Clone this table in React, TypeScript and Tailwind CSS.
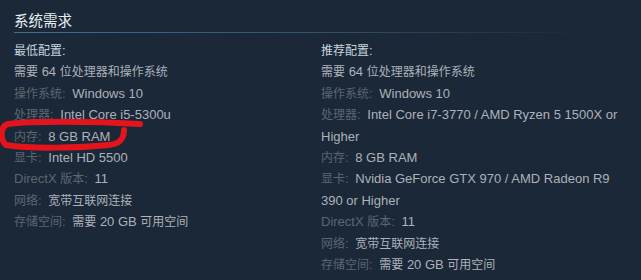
import React from "react";

type Row = { label?: string; value: string };

const minimum: Row[] = [
  { value: "需要 64 位处理器和操作系统" },
  { label: "操作系统:", value: "Windows 10" },
  { label: "处理器:", value: "Intel Core i5-5300u" },
  { label: "内存:", value: "8 GB RAM" },
  { label: "显卡:", value: "Intel HD 5500" },
  { label: "DirectX 版本:", value: "11" },
  { label: "网络:", value: "宽带互联网连接" },
  { label: "存储空间:", value: "需要 20 GB 可用空间" },
];

const recommended: Row[] = [
  { value: "需要 64 位处理器和操作系统" },
  { label: "操作系统:", value: "Windows 10" },
  { label: "处理器:", value: "Intel Core i7-3770 / AMD Ryzen 5 1500X or Higher" },
  { label: "内存:", value: "8 GB RAM" },
  { label: "显卡:", value: "Nvidia GeForce GTX 970 / AMD Radeon R9 390 or Higher" },
  { label: "DirectX 版本:", value: "11" },
  { label: "网络:", value: "宽带互联网连接" },
  { label: "存储空间:", value: "需要 20 GB 可用空间" },
];

// CJK glyphs in the screenshot are a touch smaller than the latin ones
function Mixed({ text }: { text: string }) {
  const parts = text.split(/([\u3000-\u9fff\uff00-\uffef]+)/);
  return (
    <>
      {parts.map((p, i) =>
        /[\u3000-\u9fff\uff00-\uffef]/.test(p) ? (
          <span key={i} className="text-[12px] leading-none">
            {p}
          </span>
        ) : (
          p
        )
      )}
    </>
  );
}

function ReqColumn({ title, rows }: { title: string; rows: Row[] }) {
  return (
    <div className="w-[302px]">
      <div className="text-[#c6d4df]">
        <Mixed text={title} />
      </div>
      <ul>
        {rows.map((r, i) => (
          <li key={i} className="text-[#acb2b8]">
            {r.label && (
              <span className="mr-[3px] text-[#5c6670]">
                <Mixed text={r.label} />{" "}
              </span>
            )}
            <Mixed text={r.value} />
          </li>
        ))}
      </ul>
    </div>
  );
}

export default function App() {
  return (
    <div
      className="relative h-[280px] w-[641px] overflow-hidden bg-[#1b2838]"
      style={{ fontFamily: '"Liberation Sans", Arial, "Noto Sans CJK SC", sans-serif' }}
    >
      <div className="px-[14px] pt-[11px]">
        <h2 className="text-[14.5px] leading-[20px] text-[#e9eef2]">系统需求</h2>
        <div className="mt-[1px] h-px w-[575px] bg-gradient-to-r from-[#3f6f91] via-[#33556f] to-transparent" />
        <div className="mt-[7px] flex gap-[5px] text-[13px] leading-[21.4px]">
          <ReqColumn title="最低配置:" rows={minimum} />
          <ReqColumn title="推荐配置:" rows={recommended} />
        </div>
      </div>
      {/* red hand-drawn marker around RAM row */}
      <svg
        className="pointer-events-none absolute left-0 top-0"
        width="641"
        height="280"
        viewBox="0 0 641 280"
      >
        <path
          d="M140 124 C 90 121, 30 121, 8 124 C 0 126, 0 140, 6 145 C 30 149, 80 148, 108 145 C 119 144, 124 140, 124 130"
          fill="none"
          stroke="#e3141c"
          strokeWidth="6"
          strokeLinecap="round"
        />
      </svg>
    </div>
  );
}
